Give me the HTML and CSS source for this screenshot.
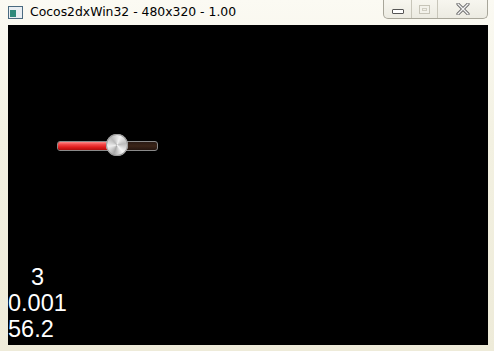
FILE: index.html
```html
<!DOCTYPE html>
<html lang="en">
<head>
  <meta charset="UTF-8" />
  <title>Cocos2dxWin32 - 480x320 - 1.00</title>
  <link rel="stylesheet" href="styles.css">
</head>
<body>
  <div class="window">
    <div class="titlebar">
      <div class="app-icon"><span class="app-icon-inner"></span></div>
      <div class="title">Cocos2dxWin32 - 480x320 - 1.00</div>
      <div class="caption-buttons">
        <div class="cap-btn cap-min"><span class="min-glyph"></span></div>
        <div class="cap-btn cap-max"><span class="max-glyph"></span></div>
        <div class="cap-btn cap-close">
          <svg width="16" height="12" viewBox="0 0 16 12">
            <path d="M3 1 L13 11 M13 1 L3 11" stroke="#6c6c6c" stroke-width="3.2" stroke-linecap="round" />
            <path d="M3 1 L13 11 M13 1 L3 11" stroke="#f4f4f4" stroke-width="1.4" stroke-linecap="round" />
          </svg>
        </div>
      </div>
    </div>
    <div class="frame-body">
      <div class="client">
        <div class="slider">
          <div class="track">
            <div class="fill"></div>
          </div>
          <div class="thumb"></div>
        </div>
        <div class="stats">
          <div class="stat stat-count">3</div>
          <div class="stat">0.001</div>
          <div class="stat">56.2</div>
        </div>
      </div>
    </div>
  </div>
</body>
</html>
```
FILE: styles.css
```css
html, body {
  margin: 0;
  padding: 0;
}
body {
  width: 494px;
  height: 351px;
  overflow: hidden;
  background: #f1efe0;
  font-family: "DejaVu Sans", "Noto Sans", sans-serif;
}
.window {
  width: 494px;
  height: 351px;
  background: linear-gradient(to bottom, #fbfaf3 0%, #f3f1e2 40%, #eeebd9 100%);
  display: flex;
  flex-direction: column;
}
.titlebar {
  height: 25px;
  display: flex;
  align-items: flex-start;
  position: relative;
}
.app-icon {
  width: 15px;
  height: 13px;
  margin: 6px 0 0 8px;
  border: 1px solid #4a6a80;
  background: #e9eef2;
  box-sizing: border-box;
  position: relative;
}
.app-icon-inner {
  position: absolute;
  left: 1px;
  top: 3px;
  width: 6px;
  height: 7px;
  background: #2f8a7c;
}
.title {
  margin: 4px 0 0 7px;
  font-size: 12.4px;
  color: #000;
  white-space: nowrap;
}
.caption-buttons {
  position: absolute;
  right: 6px;
  top: 0;
  display: flex;
  height: 18px;
  border: 1px solid #a8a69a;
  border-top: none;
  border-radius: 0 0 5px 5px;
  background: linear-gradient(to bottom, #f7f6ef, #ecebe2);
}
.cap-btn {
  height: 18px;
  display: flex;
  align-items: center;
  justify-content: center;
}
.cap-min {
  width: 27px;
  border-right: 1px solid #c8c6ba;
}
.cap-max {
  width: 25px;
  border-right: 1px solid #c8c6ba;
}
.cap-close {
  width: 49px;
}
.min-glyph {
  width: 10px;
  height: 3px;
  border: 1px solid #555;
  background: #fff;
  margin-top: 5px;
  border-radius: 1px;
}
.max-glyph {
  width: 9px;
  height: 7px;
  border: 1px solid #c6c4b8;
  box-shadow: inset 0 0 0 2px #f3f2eb, inset 0 0 0 3px #d0cec3;
}
.frame-body {
  flex: 1;
  padding: 0 6px 0 8px;
}
.client {
  width: 480px;
  height: 320px;
  background: #000;
  position: relative;
  display: flex;
  flex-direction: column;
  font-family: "Liberation Sans", Arial, sans-serif;
}
.slider {
  position: relative;
  width: 101px;
  height: 23px;
  margin: 109px 0 0 49px;
}
.track {
  position: absolute;
  left: 0;
  top: 7px;
  width: 101px;
  height: 10px;
  box-sizing: border-box;
  border: 1px solid #8a8a8a;
  border-radius: 3px;
  background: linear-gradient(to bottom, #2a1a14, #3a2418 50%, #24150f);
  overflow: hidden;
}
.fill {
  width: 55px;
  height: 100%;
  background: linear-gradient(to bottom, #ff8a8a 0%, #f24848 30%, #e01c1c 65%, #b00c0c 100%);
}
.thumb {
  position: absolute;
  left: 49px;
  top: 0;
  width: 22px;
  height: 22px;
  border-radius: 50%;
  background: conic-gradient(from 20deg, #f2f2f2, #bdbdbd, #f6f6f6, #a9a9a9, #eeeeee, #b8b8b8, #f2f2f2);
  box-shadow: inset 0 0 0 1px #9a9a9a;
}
.stats {
  margin-top: auto;
  color: #fff;
  font-size: 23.5px;
  line-height: 26px;
  padding-bottom: 3px;
}
.stat-count {
  padding-left: 23px;
}
```
